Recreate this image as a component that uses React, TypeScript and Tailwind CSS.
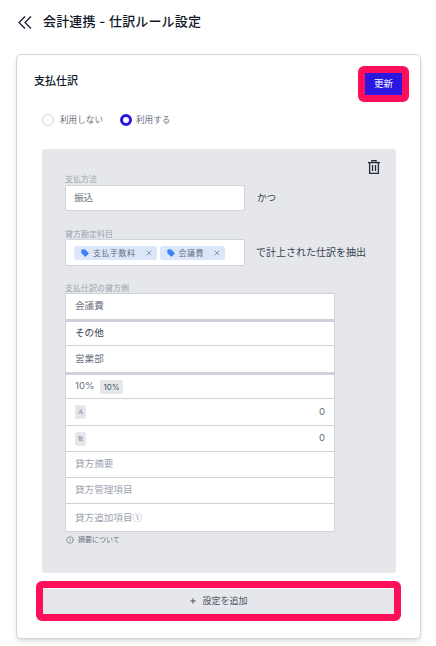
import { Plus, X, Info, Tag } from 'lucide-react';

const font = { fontFamily: 'Inter, "Noto Sans CJK JP", sans-serif' };

function Row({ children, className = '' }: { children: React.ReactNode; className?: string }) {
  return <div className={`flex items-center justify-between border border-[#cfd1db] bg-white px-[9px] text-[9.6px] text-[#6b7280] ${className}`}>{children}</div>;
}

function Chip({ label }: { label: string }) {
  return (
    <span className="flex h-[14px] items-center gap-[4px] rounded-[3px] bg-[#dbe6fb] pl-[7px] pr-[4px] text-[8px] tracking-[0.5px] text-[#6b7280]">
      <Tag className="h-[8px] w-[8px] fill-[#3b82f6] text-[#3b82f6]" />
      {label}
      <X className="ml-[5px] h-[8px] w-[8px] text-[#6b7280]" />
    </span>
  );
}

function Badge({ children }: { children: React.ReactNode }) {
  return <span className="flex h-[14px] w-[11px] items-center justify-center rounded-[2px] bg-[#e5e7eb] text-[5px] text-[#6b7280]">{children}</span>;
}

function DoubleChevron() {
  return (
    <svg width="14" height="13" viewBox="0 0 14 13" fill="none" stroke="#111827" strokeWidth="1.2">
      <path d="M7 0.5L1 6.5L7 12.5" />
      <path d="M13 0.5L7 6.5L13 12.5" />
    </svg>
  );
}

function TrashIcon({ className }: { className: string }) {
  return (
    <svg className={className} width="12" height="14" viewBox="0 0 12 14" fill="none" stroke="#1f2937" strokeWidth="1.3">
      <path d="M0 2.6H12" />
      <path d="M4 2.6V0.7H8V2.6" />
      <path d="M1.6 2.6V13.3H10.4V2.6" />
      <path d="M4.5 5V11M7.5 5V11" />
    </svg>
  );
}

export default function App() {
  return (
    <div className="h-[646px] w-[436px] overflow-hidden bg-white" style={font}>
      <header className="flex h-[44px] items-center pl-[18px]">
        <DoubleChevron />
        <h1 className="ml-[11px] text-[13px] font-medium tracking-[0.15px] text-[#111827]">会計連携 - 仕訳ルール設定</h1>
      </header>
      <main className="ml-[16px] mt-[10px] h-[585px] w-[405px] rounded-[5px] border border-[#d1d5db] bg-white shadow-md">
        <div className="flex items-start justify-between pl-[17px] pr-[11px] pt-[11px]">
          <h2 className="mt-[7px] text-[11px] font-medium text-[#111827]">支払仕訳</h2>
          <button className="flex h-[36px] w-[51px] items-center justify-center rounded-[6px] border-[7px] border-[#ff0f5a] bg-[#2a17e0] text-[9.5px] text-white">更新</button>
        </div>
        <div className="ml-[25px] mt-[11px] flex h-[14px] items-center text-[8.6px] text-[#6b7280]">
          <span className="h-[12px] w-[12px] rounded-full border border-[#d1d5db] bg-white" />
          <span className="ml-[6px]">利用しない</span>
          <span className="ml-[17px] h-[12px] w-[12px] rounded-full border-[3px] border-[#2a17e0] bg-white" />
          <span className="ml-[4px]">利用する</span>
        </div>
        <section className="relative ml-[25px] mt-[22px] h-[424px] w-[354px] rounded-[3px] bg-[#e5e7eb] px-[23px] pt-[26px]">
          <TrashIcon className="absolute right-[16px] top-[11px]" />
          <label className="block h-[10px] text-[8px] leading-[9px] text-[#9ca3af]">支払方法</label>
          <div className="flex items-center">
            <div className="flex h-[26px] w-[180px] items-center rounded-[2px] border border-[#d1d5db] bg-white pl-[8px] text-[9.6px] text-[#6b7280]">振込</div>
            <span className="ml-[12px] text-[9.6px] text-[#374151]">かつ</span>
          </div>
          <label className="mt-[18px] block h-[10px] text-[8px] leading-[11px] text-[#9ca3af]">貸方勘定科目</label>
          <div className="flex items-center">
            <div className="flex h-[27px] w-[180px] items-center gap-[3px] rounded-[2px] border border-[#d1d5db] bg-white pl-[8px]">
              <Chip label="支払手数料" />
              <Chip label="会議費" />
            </div>
            <span className="ml-[11px] text-[10px] text-[#374151]">で計上された仕訳を抽出</span>
          </div>
          <label className="mt-[17px] block h-[10px] text-[8px] leading-[11px] text-[#9ca3af]">支払仕訳の貸方側</label>
          <div className="w-[270px]">
            <Row className="h-[27px]">会議費</Row>
            <Row className="h-[26px] border-t-2 text-[#374151]">その他</Row>
            <Row className="h-[27px] border-t-0">営業部</Row>
            <Row className="h-[26px] justify-start gap-[6px] border-t-2">
              10%
              <span className="flex h-[14px] items-center rounded-[2px] bg-[#e5e7eb] px-[3px] text-[8px] text-[#4b5563]">10%</span>
            </Row>
            <Row className="h-[27px] border-t-0"><Badge>込</Badge><span>0</span></Row>
            <Row className="h-[26px] border-t-0"><Badge>税</Badge><span>0</span></Row>
            <Row className="h-[26px] border-t-0 text-[#9ca3af]">貸方摘要</Row>
            <Row className="h-[26px] border-t-0 text-[#9ca3af]">貸方管理項目</Row>
            <Row className="h-[28px] border-t-0 text-[#9ca3af]">
              <span style={{ fontFamily: '"Noto Sans CJK JP", sans-serif' }}>貸方追加項目①</span>
            </Row>
          </div>
          <div className="mt-[3px] flex items-center gap-[4px] pl-[1px] text-[7px] text-[#6b7280]">
            <Info className="h-[8px] w-[8px]" />
            摘要について
          </div>
        </section>
        <button className="ml-[19px] mt-[8px] block h-[40px] w-[365px] rounded-[6px] border-[7px] border-[#ff0f5a] bg-white">
          <span className="flex h-[25px] items-center justify-center gap-[5px] bg-[#e5e7eb] text-[9px] text-[#4b5563]">
            <Plus className="h-[8px] w-[8px] text-[#111827]" />
            設定を追加
          </span>
        </button>
      </main>
    </div>
  );
}
